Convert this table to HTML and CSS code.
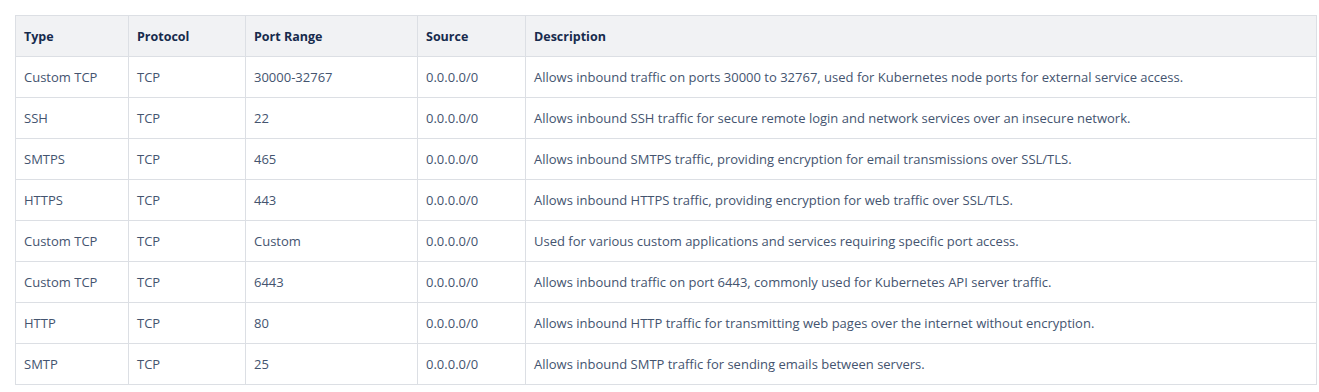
FILE: index.html
```html
<!DOCTYPE html>
<html>
<head>
<meta charset="utf-8">
<link rel="stylesheet" href="styles.css">
</head>
<body>
<div class="wrap">
<table class="rules">
<colgroup>
<col class="c-type"><col class="c-proto"><col class="c-port"><col class="c-src"><col class="c-desc">
</colgroup>
<thead>
<tr><th>Type</th><th>Protocol</th><th>Port Range</th><th>Source</th><th>Description</th></tr>
</thead>
<tbody>
<tr><td>Custom TCP</td><td>TCP</td><td>30000-32767</td><td>0.0.0.0/0</td><td>Allows inbound traffic on ports 30000 to 32767, used for Kubernetes node ports for external service access.</td></tr>
<tr><td>SSH</td><td>TCP</td><td>22</td><td>0.0.0.0/0</td><td>Allows inbound SSH traffic for secure remote login and network services over an insecure network.</td></tr>
<tr><td>SMTPS</td><td>TCP</td><td>465</td><td>0.0.0.0/0</td><td>Allows inbound SMTPS traffic, providing encryption for email transmissions over SSL/TLS.</td></tr>
<tr><td>HTTPS</td><td>TCP</td><td>443</td><td>0.0.0.0/0</td><td>Allows inbound HTTPS traffic, providing encryption for web traffic over SSL/TLS.</td></tr>
<tr><td>Custom TCP</td><td>TCP</td><td>Custom</td><td>0.0.0.0/0</td><td>Used for various custom applications and services requiring specific port access.</td></tr>
<tr><td>Custom TCP</td><td>TCP</td><td>6443</td><td>0.0.0.0/0</td><td>Allows inbound traffic on port 6443, commonly used for Kubernetes API server traffic.</td></tr>
<tr><td>HTTP</td><td>TCP</td><td>80</td><td>0.0.0.0/0</td><td>Allows inbound HTTP traffic for transmitting web pages over the internet without encryption.</td></tr>
<tr><td>SMTP</td><td>TCP</td><td>25</td><td>0.0.0.0/0</td><td>Allows inbound SMTP traffic for sending emails between servers.</td></tr>
</tbody>
</table>
</div>
</body>
</html>
```
FILE: styles.css
```css
html, body {
  margin: 0;
  padding: 0;
  background: #ffffff;
}
.wrap {
  padding: 15px 0 0 15px;
}
.rules {
  border-collapse: collapse;
  table-layout: fixed;
  width: 1301px;
  font-family: "Open Sans", "Noto Sans", sans-serif;
  font-size: 13px;
  color: #44546f;
}
.c-type { width: 113px; }
.c-proto { width: 117px; }
.c-port { width: 172px; }
.c-src { width: 108px; }
.c-desc { width: 791px; }
.rules th, .rules td {
  border: 1px solid #dcdfe4;
  height: 40px;
  padding: 0 8px;
  text-align: left;
  vertical-align: middle;
  white-space: nowrap;
}
.rules th {
  background: #f1f2f4;
  color: #172b4d;
  font-weight: 700;
  font-size: 12.5px;
}
```
